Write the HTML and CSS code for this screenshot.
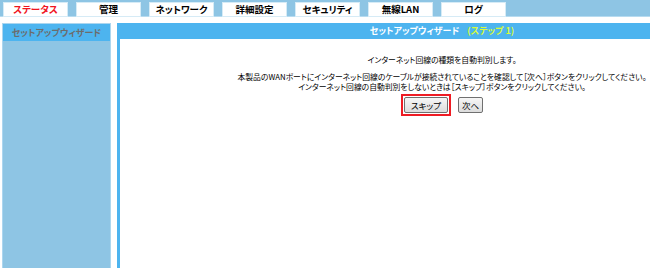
FILE: index.html
```html
<!DOCTYPE html>
<html lang="ja">
<head>
    <meta charset="UTF-8">
    <title>セットアップウィザード</title>
    <link rel="stylesheet" href="styles.css">
</head>
<body>

    <!-- Top menu -->
    <div class="menu">
        <div class="tab active">ステータス</div>
        <div class="tab">管理</div>
        <div class="tab">ネットワーク</div>
        <div class="tab">詳細設定</div>
        <div class="tab">セキュリティ</div>
        <div class="tab">無線LAN</div>
        <div class="tab">ログ</div>
    </div>

    <div class="main">
        <!-- Side menu -->
        <div class="side">
            <div class="side-title">セットアップウィザード</div>
        </div>

        <!-- Wizard -->
        <div class="content">
            <div class="content-title">セットアップウィザード <span class="step">(ステップ 1)</span></div>
            <div class="wizard">
                <p class="lead">インターネット回線の種類を自動判別します。</p>
                <p class="note">本製品のWANポートにインターネット回線のケーブルが接続されていることを確認して［次へ］ボタンをクリックしてください。<br>インターネット回線の自動判別をしないときは［スキップ］ボタンをクリックしてください。</p>
                <div class="buttons">
                    <span class="focus"><button type="button">スキップ</button></span>
                    <button type="button" class="small">次へ</button>
                </div>
            </div>
        </div>
    </div>

</body>
</html>
```

FILE: styles.css
```css
/* page */
body {
    margin: 0;
    overflow: hidden;
    background-color: #fff;
    font-family: "Noto Sans CJK JP", "Liberation Sans", sans-serif;
    font-size: 9px;
    font-feature-settings: "palt";
    color: #000;
}

/* top menu */
.menu {
    display: flex;
    gap: 8px;
    height: 17px;
    padding: 2px 0 0 3px;
    box-sizing: border-box;
    background-color: #8ec5e4;
    border-bottom: 1px solid #b6dbf0;
}

.tab {
    width: 63px;
    height: 13px;
    line-height: 13px;
    background-color: #fff;
    border: 1px solid #d6ebf6;
    text-align: center;
    font-weight: bold;
    font-size: 9.5px;
}

.tab.active {
    color: #f0141e;
}

/* layout */
.main {
    display: flex;
    gap: 6px;
    margin-top: 6px;
    padding-left: 2px;
}

.side {
    width: 107px;
    height: 250px;
    flex: none;
    background-color: #8ec5e4;
    border: 1px solid #acd6ef;
}

.side-title {
    height: 17px;
    line-height: 17px;
    background-color: #4db4ef;
    color: #6c6c6c;
    text-align: center;
    font-weight: bold;
}

.content {
    flex: 1;
    height: 250px;
    border-left: 3px solid #4db4ef;
}

.content-title {
    height: 16px;
    line-height: 16px;
    padding-left: 114px;
    background-color: #4db4ef;
    color: #fff;
    text-align: center;
    font-weight: bold;
}

.step {
    color: #d8fb3a;
    margin-left: 6px;
}

/* wizard body */
.wizard {
    padding: 16px 0 0 114px;
    text-align: center;
    font-size: 7.8px;
    white-space: nowrap;
}

.wizard p {
    margin: 0;
    line-height: 10px;
}

.lead {
    margin-bottom: 7px !important;
}

.buttons {
    display: flex;
    justify-content: center;
    align-items: center;
    gap: 7px;
    margin-top: 2px;
}

.focus {
    display: inline-block;
    border: 2px solid #ee1c24;
    padding: 1px;
}

button {
    font-family: inherit;
    font-size: 8.5px;
    font-feature-settings: "palt";
    height: 16px;
    padding: 0 6px;
    line-height: 14px;
    background: linear-gradient(#f6f6f6, #dcdcdc);
    border: 1px solid #707070;
    border-radius: 2px;
    color: #000;
}

button.small {
    padding: 0 3px;
}
```
